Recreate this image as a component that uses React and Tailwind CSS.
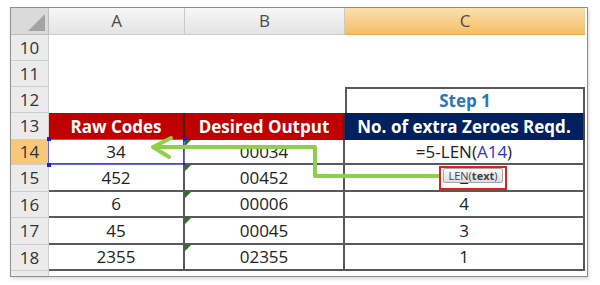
import { Fragment } from "react";

const dark = "border-[#595959]";

const Cell = ({ className = "", children }) => (
  <div className={"relative flex items-center justify-center " + className}>{children}</div>
);

const RowHead = ({ n, active }) => (
  <div
    className={[
      "flex items-center justify-center border-b border-r border-[#cdcdcd] text-[17px] text-[#333]",
      active ? "bg-[#f8c878]" : "bg-[#ebebeb]",
    ].join(" ")}
  >
    {n}
  </div>
);

// little green "number stored as text" marker
const TextFlag = () => (
  <span className="absolute left-0 top-0 w-0 h-0 border-t-[6px] border-r-[6px] border-t-[#1d7a1d] border-r-transparent" />
);

const data = [
  { n: 15, a: "452", b: "00452", c: "2" },
  { n: 16, a: "6", b: "00006", c: "4" },
  { n: 17, a: "45", b: "00045", c: "3" },
  { n: 18, a: "2355", b: "02355", c: "1" },
];

export default function App() {
  return (
    <div className="relative w-[600px] h-[285px] bg-white pt-[7px] pl-[10px] font-['Open_Sans',sans-serif]">
      {/* ── Sheet frame ── */}
      <div className="w-[578px] border border-[#8f8f8f] pr-[2px] bg-white shadow-[1px_2px_3px_rgba(0,0,0,0.15)]">
        <div className="grid grid-cols-[38px_136px_160px_240px] grid-rows-[27px_26px_26px_26px_27px_25px_27px_26px_27px_26px_5px]">
          {/* Column headers */}
          <div className="relative bg-[#dadada] border-b border-r border-[#bdbdbd]">
            <span className="absolute right-[3px] bottom-[3px] w-0 h-0 border-l-[17px] border-b-[17px] border-l-transparent border-b-[#a3a3a3]" />
          </div>
          <Cell className="bg-gradient-to-b from-[#f7f7f7] to-[#e3e3e3] border-b border-r border-[#c9c9c9] text-[17px] text-[#4a4a4a]">A</Cell>
          <Cell className="bg-gradient-to-b from-[#f7f7f7] to-[#e3e3e3] border-b border-r border-[#c9c9c9] text-[17px] text-[#4a4a4a]">B</Cell>
          <Cell className="bg-gradient-to-b from-[#fbe0ae] to-[#f5bd63] border-b border-[#e3a94f] text-[17px] text-[#4a4a4a]">C</Cell>

          {/* Rows 10-11 empty */}
          <RowHead n={10} />
          <div />
          <div />
          <div />
          <RowHead n={11} />
          <div />
          <div />
          <div />

          {/* Row 12 */}
          <RowHead n={12} />
          <div />
          <div />
          <Cell className={"border-t-2 border-l-2 border-r-2 " + dark + " text-[17px] font-bold text-[#2e75b6]"}>
            Step 1
          </Cell>

          {/* Row 13 */}
          <RowHead n={13} />
          <Cell className="bg-[#c00000] border-r-2 border-[#4a1a1a] text-[17px] font-bold text-white">Raw Codes</Cell>
          <Cell className="bg-[#c00000] border-r-2 border-[#3a2a3a] text-[17px] font-bold text-white">Desired Output</Cell>
          <Cell className="bg-[#002060] border-r-2 border-[#444] text-[17px] font-bold text-white">
            No. of extra Zeroes Reqd.
          </Cell>

          {/* Row 14 */}
          <RowHead n={14} active />
          <Cell className={"border-r-2 border-b-2 " + dark + " text-[17px] text-[#222]"}>
            34
            <span className="absolute -left-px -top-px -right-[2px] -bottom-[2px] border border-[#6a6ae0]" />
            <span className="absolute -left-[2px] -top-[3px] w-[4px] h-[4px] bg-[#1a1ae6]" />
            <span className="absolute -right-[4px] -top-[3px] w-[4px] h-[4px] bg-[#1a1ae6]" />
            <span className="absolute -left-[2px] -bottom-[4px] w-[4px] h-[4px] bg-[#1a1ae6]" />
            <span className="absolute -right-[4px] -bottom-[4px] w-[4px] h-[4px] bg-[#1a1ae6]" />
          </Cell>
          <Cell className={"border-r-2 border-b-2 " + dark + " text-[17px] text-[#222]"}>
            <TextFlag />
            00034
          </Cell>
          <Cell className={"border-r-2 border-b-2 " + dark + " text-[17px] text-[#222]"}>
            <span>
              =5-LEN(<span className="text-[#3333cc]">A14</span>)
            </span>
          </Cell>

          {/* Rows 15-18 */}
          {data.map((r) => (
            <Fragment key={r.n}>
              <RowHead n={r.n} />
              <Cell className={"border-r-2 border-b-2 " + dark + " text-[17px] text-[#222]"}>{r.a}</Cell>
              <Cell className={"border-r-2 border-b-2 " + dark + " text-[17px] text-[#222]"}>
                <TextFlag />
                {r.b}
              </Cell>
              <Cell className={"border-r-2 border-b-2 " + dark + " text-[17px] text-[#222]"}>{r.c}</Cell>
            </Fragment>
          ))}

          {/* Partial row below 18 */}
          <div className="bg-[#ebebeb] border-r border-[#cdcdcd]" />
          <div />
          <div />
          <div />
        </div>
      </div>

      {/* ── Green arrow ── */}
      <svg className="absolute inset-0 pointer-events-none" width="600" height="285" viewBox="0 0 600 285">
        <path
          d="M441 176 L315 176 L315 147 L154 147"
          fill="none"
          stroke="#8fcf4c"
          strokeWidth="4"
          strokeLinejoin="round"
        />
        <path
          d="M171 138 L153 147 L169 157"
          fill="none"
          stroke="#8fcf4c"
          strokeWidth="4"
          strokeLinecap="round"
          strokeLinejoin="round"
        />
      </svg>

      {/* ── Function tooltip ── */}
      <div className="absolute left-[439px] top-[166px] w-[68px] h-[24px] border-2 border-[#e81c1c]">
        <div className="absolute left-[2px] top-0 w-[60px] h-[15px] flex items-center justify-center rounded-[2px] border border-[#a5a5a5] bg-gradient-to-b from-[#fafafa] to-[#dedede] text-[11px] leading-none text-[#444]">
          LEN(<b className="font-bold">text</b>)
        </div>
      </div>
    </div>
  );
}
